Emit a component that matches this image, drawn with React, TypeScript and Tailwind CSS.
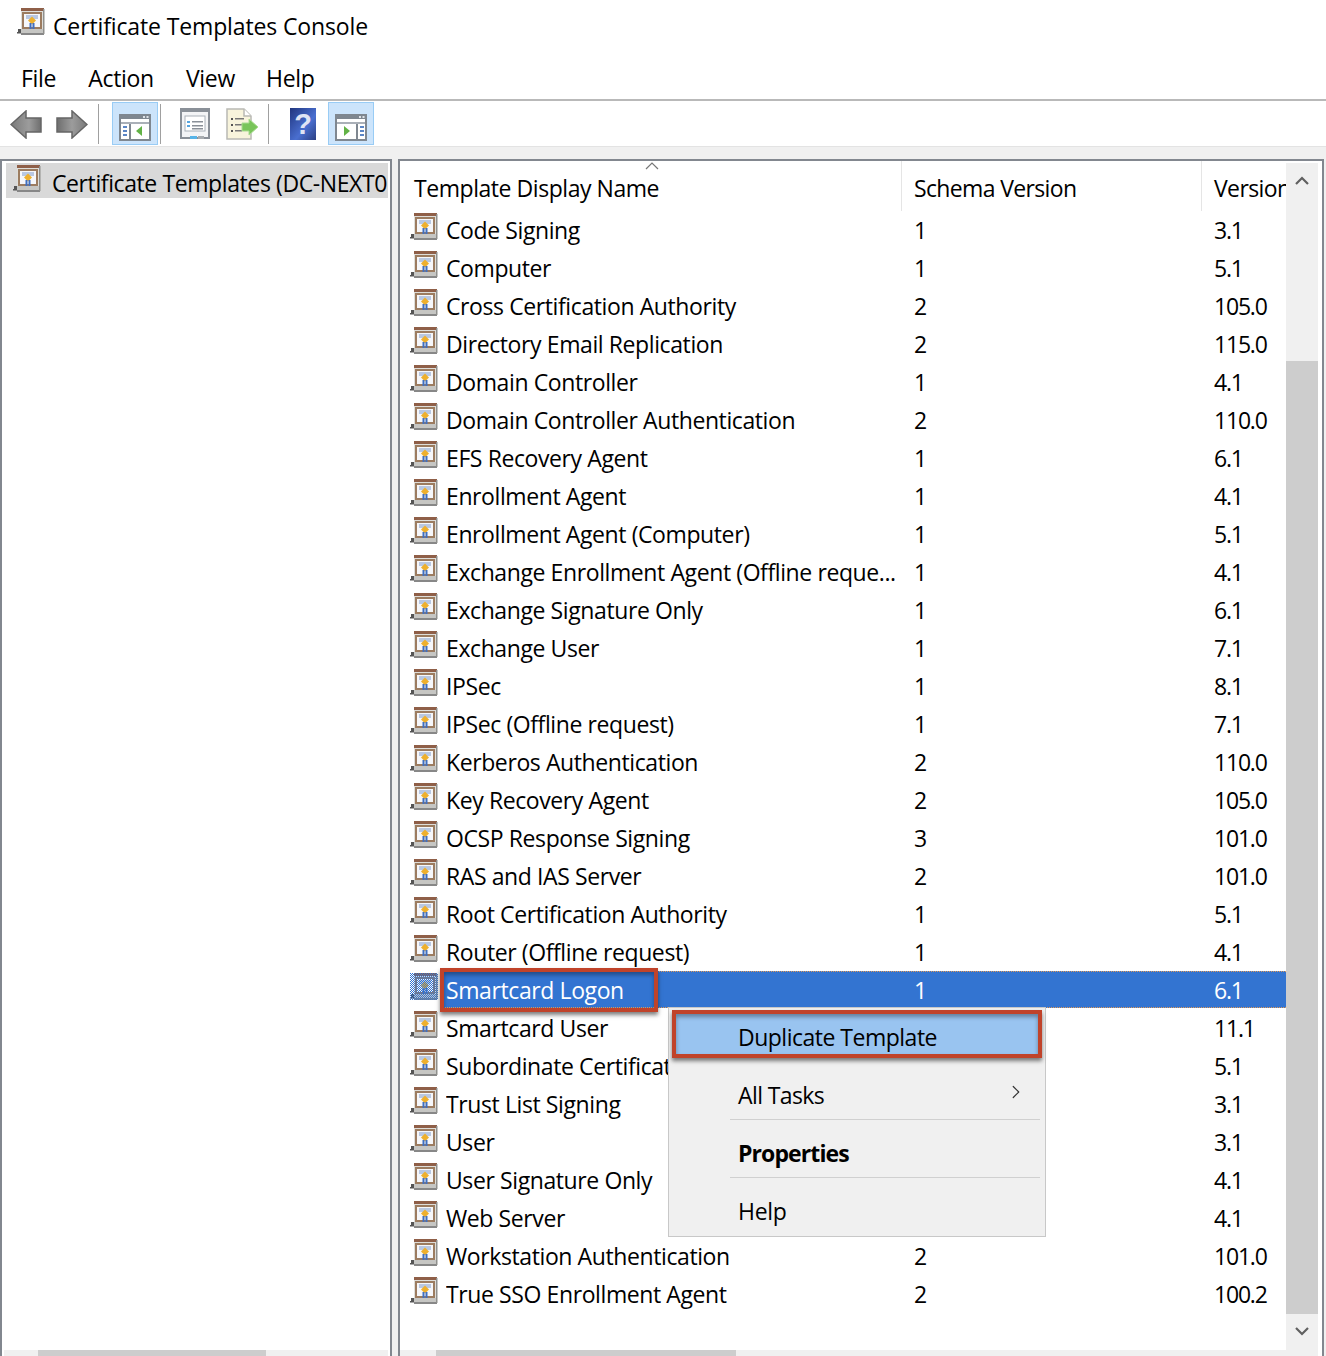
import { ChevronRight } from "lucide-react";

const ROWS: [string, string, string][] = [
  ["Code Signing", "1", "3.1"],
  ["Computer", "1", "5.1"],
  ["Cross Certification Authority", "2", "105.0"],
  ["Directory Email Replication", "2", "115.0"],
  ["Domain Controller", "1", "4.1"],
  ["Domain Controller Authentication", "2", "110.0"],
  ["EFS Recovery Agent", "1", "6.1"],
  ["Enrollment Agent", "1", "4.1"],
  ["Enrollment Agent (Computer)", "1", "5.1"],
  ["Exchange Enrollment Agent (Offline reque...", "1", "4.1"],
  ["Exchange Signature Only", "1", "6.1"],
  ["Exchange User", "1", "7.1"],
  ["IPSec", "1", "8.1"],
  ["IPSec (Offline request)", "1", "7.1"],
  ["Kerberos Authentication", "2", "110.0"],
  ["Key Recovery Agent", "2", "105.0"],
  ["OCSP Response Signing", "3", "101.0"],
  ["RAS and IAS Server", "2", "101.0"],
  ["Root Certification Authority", "1", "5.1"],
  ["Router (Offline request)", "1", "4.1"],
  ["Smartcard Logon", "1", "6.1"],
  ["Smartcard User", "", "11.1"],
  ["Subordinate Certification Authority", "", "5.1"],
  ["Trust List Signing", "", "3.1"],
  ["User", "", "3.1"],
  ["User Signature Only", "", "4.1"],
  ["Web Server", "", "4.1"],
  ["Workstation Authentication", "2", "101.0"],
  ["True SSO Enrollment Agent", "2", "100.2"],
];

function CertIcon({ selected = false }: { selected?: boolean }) {
  return (
    <svg width="28" height="27" viewBox="0 0 28 27" className="block shrink-0">
      <rect x="4" y="0" width="23" height="3" fill="#8f5f48" />
      <rect x="4" y="3" width="23" height="19" fill="#dededa" />
      <rect x="4" y="21" width="23" height="4" fill="#c6c6c3" />
      <rect x="4" y="25" width="23" height="2" fill="#878787" />
      <rect x="26" y="1" width="1.500" height="25" fill="#8f8f8c" />
      <rect x="6" y="5" width="18" height="15" fill="#f6f7fa" stroke="#9c7c60" strokeWidth="2" />
      <rect x="9" y="7" width="12" height="4" fill="#b9c8e2" />
      <path d="M15 8.500l4 4-4 4-4-4z" fill="#eeb02e" />
      <rect x="12.500" y="15" width="2" height="6" fill="#3f6fc0" />
      <rect x="15.500" y="15" width="2" height="6" fill="#3f6fc0" />
      <path d="M0 24h4v1.500H0zM1 21h3v3H1z" fill="#555" />
      {selected && (
        <>
          <pattern id="dither" width="2" height="2" patternUnits="userSpaceOnUse">
            <rect width="1" height="1" fill="#3374d1" />
            <rect x="1" y="1" width="1" height="1" fill="#3374d1" />
          </pattern>
          <rect width="28" height="27" fill="url(#dither)" />
        </>
      )}
    </svg>
  );
}

function ArrowLeft() {
  return (
    <svg width="32" height="29" viewBox="0 0 32 29" className="block">
      <defs>
        <linearGradient id="arrowL" x1="0" x2="1" y1="0" y2="0">
          <stop offset="0" stopColor="#7a7a7a" />
          <stop offset="0.6" stopColor="#9c9c9c" />
          <stop offset="1" stopColor="#6e6e6e" />
        </linearGradient>
      </defs>
      <path d="M1 14.500L16 1v7h15v14H16v6z" fill="url(#arrowL)" stroke="#666" strokeWidth="1.500" />
    </svg>
  );
}

function ArrowRight() {
  return (
    <svg width="32" height="29" viewBox="0 0 32 29" className="block">
      <defs>
        <linearGradient id="arrowR" x1="0" x2="1" y1="0" y2="0">
          <stop offset="0" stopColor="#6e6e6e" />
          <stop offset="0.5" stopColor="#9c9c9c" />
          <stop offset="1" stopColor="#7a7a7a" />
        </linearGradient>
      </defs>
      <path d="M31 14.500L16 1v7H1v14h15v6z" fill="url(#arrowR)" stroke="#666" strokeWidth="1.500" />
    </svg>
  );
}

// window with a side pane and a little green triangle; mirrored for the action pane
function PaneIcon({ right = false }: { right?: boolean }) {
  return (
    <svg width="32" height="27" viewBox="0 0 32 27" className="block">
      <rect x="1" y="1" width="30" height="25" fill="#fff" stroke="#7f8790" strokeWidth="2" />
      <rect x="1" y="1" width="30" height="4" fill="#7f8790" />
      <rect x="24" y="2" width="2" height="2" fill="#dfe3e8" />
      <rect x="27.500" y="2" width="2" height="2" fill="#dfe3e8" />
      <rect x="2" y="8" width="28" height="2" fill="#aab0b8" />
      {right ? (
        <>
          <rect x="21" y="10" width="2" height="15" fill="#7f8790" />
          <path d="M9 12v10l6-5z" fill="#62b246" />
          <rect x="25" y="12" width="4" height="2" fill="#5b86c6" />
          <rect x="25" y="16" width="4" height="2" fill="#5b86c6" />
          <rect x="25" y="20" width="4" height="2" fill="#5b86c6" />
        </>
      ) : (
        <>
          <rect x="10" y="10" width="2" height="15" fill="#7f8790" />
          <path d="M23 12v10l-6-5z" fill="#62b246" />
          <rect x="4" y="12" width="4" height="2" fill="#5b86c6" />
          <rect x="4" y="16" width="4" height="2" fill="#5b86c6" />
          <rect x="4" y="20" width="4" height="2" fill="#5b86c6" />
        </>
      )}
    </svg>
  );
}

function PropsIcon() {
  return (
    <svg width="30" height="32" viewBox="0 0 30 32" className="block">
      <rect x="1" y="1" width="28" height="29" fill="#f3f4f6" stroke="#8a9098" strokeWidth="2" />
      <rect x="1" y="1" width="28" height="3" fill="#8a9098" />
      <rect x="5" y="8" width="20" height="15" fill="#fff" stroke="#aab0b8" />
      <rect x="7" y="13" width="3" height="2" fill="#57a5e0" />
      <rect x="7" y="17" width="3" height="2" fill="#57a5e0" />
      <rect x="12" y="13" width="11" height="1.500" fill="#8a9098" />
      <rect x="12" y="17" width="11" height="1.500" fill="#8a9098" />
      <rect x="12" y="20" width="11" height="1.500" fill="#8a9098" />
      <rect x="10" y="28" width="7" height="3" fill="#57b4e8" />
      <rect x="18" y="28" width="6" height="3" fill="#a8acb0" />
    </svg>
  );
}

function ExportIcon() {
  return (
    <svg width="32" height="32" viewBox="0 0 32 32" className="block">
      <path d="M1 1h17l7 7v23H1z" fill="#f8f4dc" stroke="#b9b9b4" strokeWidth="1.500" />
      <path d="M18 1v7h7" fill="#fff" stroke="#b9b9b4" strokeWidth="1.500" />
      <rect x="5" y="10" width="2" height="2" fill="#555" />
      <rect x="9" y="10" width="9" height="1.500" fill="#777" />
      <rect x="5" y="16" width="2" height="2" fill="#555" />
      <rect x="9" y="16" width="7" height="1.500" fill="#777" />
      <rect x="5" y="22" width="2" height="2" fill="#555" />
      <rect x="9" y="22" width="7" height="1.500" fill="#777" />
      <path d="M16 15h7v-4l9 8-9 8v-4h-7z" fill="#79c55a" stroke="#a9dc91" />
    </svg>
  );
}

function HelpIcon() {
  return (
    <svg width="26" height="32" viewBox="0 0 26 32" className="block">
      <defs>
        <linearGradient id="helpBg" x1="0" x2="1" y1="0" y2="1">
          <stop offset="0" stopColor="#20357e" />
          <stop offset="0.6" stopColor="#4a6fd0" />
          <stop offset="1" stopColor="#2b3f82" />
        </linearGradient>
      </defs>
      <rect width="26" height="32" fill="url(#helpBg)" />
      <text x="13" y="26" textAnchor="middle" fontFamily="'Liberation Sans', sans-serif" fontWeight="700" fontSize="29" fill="#dfe4f4">?</text>
    </svg>
  );
}

function ToolSep() {
  return <div className="w-[1px] h-[40px] bg-[#a0a0a0] shrink-0" />;
}

function ToolToggle({ right = false }: { right?: boolean }) {
  return (
    <div className="w-[46px] h-[43px] shrink-0 flex justify-center pt-[11px] bg-[#cce4fb] border border-[#99ccf5]">
      <PaneIcon right={right} />
    </div>
  );
}

function HScroll({ thumbLeft, thumbWidth }: { thumbLeft: string; thumbWidth: string }) {
  return (
    <div className="h-[6px] shrink-0 bg-[#f0f0f0] flex">
      <div className={`${thumbLeft} ${thumbWidth} h-full bg-[#cdcdcd]`} />
    </div>
  );
}

export default function App() {
  return (
    <div
      className="relative w-[1326px] h-[1356px] overflow-hidden bg-white flex flex-col text-[23px] leading-[38px] text-black tracking-[-0.3px]"
      style={{ fontFamily: "'Open Sans', 'Noto Sans', sans-serif" }}
    >
      {/* title bar */}
      <div className="h-[58px] shrink-0 flex items-start pl-[17px] pt-[8px]">
        <CertIcon />
        <span className="ml-[8px] mt-[-1px] tracking-[-0.13px]">Certificate Templates Console</span>
      </div>

      {/* menu bar */}
      <div className="h-[43px] shrink-0 flex items-center pl-[21px] pb-[1px] gap-[32px] border-b-2 border-[#b9b9b9]">
        <span>File</span>
        <span>Action</span>
        <span>View</span>
        <span className="ml-[-1px]">Help</span>
      </div>

      {/* toolbar */}
      <div className="h-[46px] shrink-0 flex items-center pl-[10px] border-b border-[#e3e3e3]">
        <div className="mt-[2px]"><ArrowLeft /></div>
        <div className="ml-[14px] mt-[2px]"><ArrowRight /></div>
        <div className="ml-[10px]"><ToolSep /></div>
        <div className="ml-[13px]"><ToolToggle /></div>
        <div className="ml-[2px]"><ToolSep /></div>
        <div className="ml-[19px] mt-[1px]"><PropsIcon /></div>
        <div className="ml-[16px] mt-[1px]"><ExportIcon /></div>
        <div className="ml-[10px]"><ToolSep /></div>
        <div className="ml-[21px] mt-[1px]"><HelpIcon /></div>
        <div className="ml-[12px]"><ToolToggle right /></div>
      </div>

      {/* panes */}
      <div className="flex-1 min-h-0 bg-[#f0f0f0] pt-[12px] flex">
        {/* tree */}
        <div className="w-[392px] shrink-0 bg-white border-t-2 border-x-2 border-[#82878f] flex flex-col">
          <div className="flex-1 pt-[2px] pl-[4px] pr-[2px]">
            <div className="h-[35px] bg-[#d9d9d9] flex items-start pl-[7px] overflow-hidden whitespace-nowrap">
              <div className="mt-[2px]"><CertIcon /></div>
              <span className="ml-[11px] mt-[1px] tracking-[-0.4px]">Certificate Templates (DC-NEXT0</span>
            </div>
          </div>
          <div className="px-[2px]">
            <HScroll thumbLeft="ml-[34px]" thumbWidth="w-[228px]" />
          </div>
        </div>

        {/* list */}
        <div className="ml-[6px] w-[926px] shrink-0 bg-white border-t-2 border-x-2 border-[#82878f] flex">
          <div className="w-[886px] shrink-0 flex flex-col overflow-hidden">
            {/* header */}
            <div className="relative h-[50px] shrink-0 flex whitespace-nowrap">
              <div className="w-[501px] shrink-0 pl-[14px] pt-[8px] tracking-[-0.45px]">Template Display Name</div>
              <div className="w-[300px] shrink-0 pl-[12px] pt-[8px] border-l border-[#e5e5e5] tracking-[-0.65px]">Schema Version</div>
              <div className="flex-1 pl-[12px] pt-[8px] border-l border-[#e5e5e5] overflow-hidden tracking-[-0.6px]">Version</div>
              <svg width="14" height="8" viewBox="0 0 14 8" className="absolute left-[245px] top-[1px]">
                <path d="M1 7l6-6 6 6" fill="none" stroke="#777" strokeWidth="1.200" />
              </svg>
            </div>

            {/* rows */}
            <div className="flex-1 min-h-0 flex flex-col">
              {ROWS.map(([name, schema, version], i) => {
                const selected = name === "Smartcard Logon";
                return (
                  <div key={i} className="relative h-[38px] shrink-0 flex whitespace-nowrap">
                    <div className="w-[40px] shrink-0 pl-[10px] pt-[2px]">
                      <CertIcon selected={selected} />
                    </div>
                    <div
                      className={
                        selected
                          ? "flex-1 flex pl-[6px] h-[37px] leading-[36px] bg-[#3374d1] text-white border-y border-dotted border-[#e09a5a]"
                          : "flex-1 flex pl-[6px] leading-[38px]"
                      }
                    >
                      <div className="w-[468px] shrink-0 overflow-hidden tracking-[-0.4px]">{name}</div>
                      <div className="w-[300px] shrink-0">{schema}</div>
                      <div className="flex-1 tracking-[-1.2px]">{version}</div>
                    </div>
                    {selected && (
                      <div className="absolute left-[40px] top-[-3px] w-[218px] h-[44px] border-[4px] border-[#c0432a] shadow-[0_3px_4px_rgba(0,0,0,0.5),inset_0_3px_4px_rgba(0,0,0,0.35)]" />
                    )}
                  </div>
                );
              })}
            </div>

            <HScroll thumbLeft="ml-[36px]" thumbWidth="w-[300px]" />
          </div>

          {/* vertical scrollbar */}
          <div className="w-[32px] shrink-0 mt-[2px] mr-[3px] bg-[#f0f0f0] flex flex-col items-center">
            <div className="h-[36px] shrink-0 w-full flex justify-center pt-[13px]">
              <svg width="14" height="10" viewBox="0 0 14 10"><path d="M1 8l6-6 6 6" fill="none" stroke="#606060" strokeWidth="2.200" /></svg>
            </div>
            <div className="mt-[162px] w-full h-[953px] shrink-0 bg-[#cdcdcd]" />
            <div className="shrink-0 w-full flex justify-center pt-[12px]">
              <svg width="14" height="10" viewBox="0 0 14 10"><path d="M1 2l6 6 6-6" fill="none" stroke="#606060" strokeWidth="2.200" /></svg>
            </div>
          </div>
        </div>
      </div>

      {/* context menu */}
      <div className="absolute left-[668px] top-[1007px] w-[378px] h-[230px] bg-[#f0f0f0] border border-[#c8c8c8] pt-[2px] whitespace-nowrap">
        <div className="mx-[3px] h-[48px] pl-[62px] pt-[5px] bg-[#99c4f0] border-[4px] border-[#c0432a] shadow-[0_3px_4px_rgba(0,0,0,0.5),inset_0_3px_4px_rgba(0,0,0,0.35)] leading-[36px] tracking-[-0.5px]">
          Duplicate Template
        </div>
        <div className="relative h-[61px] pl-[69px] pt-[18px] leading-[38px] tracking-[-0.6px]">
          All Tasks
          <ChevronRight className="absolute left-[336px] top-[23px] text-[#333]" size={22} strokeWidth={1.3} />
        </div>
        <div className="ml-[61px] mr-[5px] h-[1px] bg-[#d0d0d0]" />
        <div className="h-[57px] pl-[69px] pt-[14px] font-bold tracking-[-0.9px]">Properties</div>
        <div className="ml-[61px] mr-[5px] h-[1px] bg-[#d0d0d0]" />
        <div className="h-[56px] pl-[69px] pt-[14px]">Help</div>
      </div>
    </div>
  );
}
